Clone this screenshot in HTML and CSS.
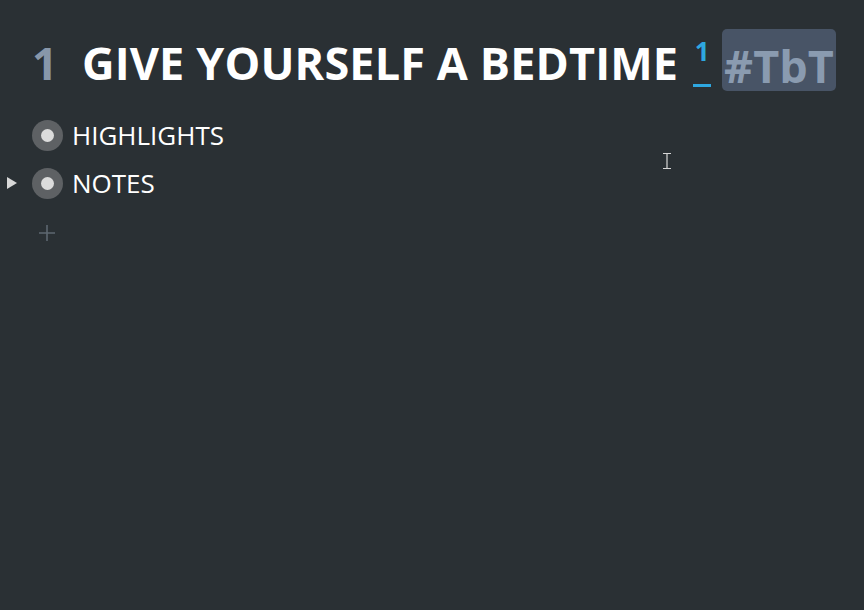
FILE: index.html
```html
<!DOCTYPE html>
<html lang="en">
<head>
  <meta charset="UTF-8">
  <title>Give yourself a bedtime</title>
  <link rel="stylesheet" href="styles.css">
</head>
<body>

<div class="page">
  <h1 class="title">
    <span class="num">1</span>
    <span class="text">GIVE YOURSELF A BEDTIME</span>
    <sup class="ref">1</sup>
    <span class="tag">#TbT</span>
  </h1>

  <div class="blocks">
    <div class="block">
      <span class="toggle"></span>
      <span class="bullet"><span class="dot"></span></span>
      <span class="label">HIGHLIGHTS</span>
    </div>
    <div class="block">
      <span class="toggle open">
        <svg width="12" height="12" viewBox="0 0 12 12"><path d="M1 0 L11 6 L1 12 Z" fill="#d8d8d8"/></svg>
      </span>
      <span class="bullet"><span class="dot"></span></span>
      <span class="label">NOTES</span>
    </div>
    <div class="add">
      <svg width="18" height="18" viewBox="0 0 18 18"><path d="M9 1 V17 M1 9 H17" stroke="#5d6770" stroke-width="1.6"/></svg>
    </div>
  </div>
</div>

<div class="cursor">
  <svg width="8" height="16" viewBox="0 0 8 16"><path d="M0 0.5 H8 M0 15.5 H8 M4 0 V16" stroke="#d6d6d6" stroke-width="1.2"/></svg>
</div>

</body>
</html>
```

FILE: styles.css
```css
body {
  margin: 0;
  padding: 0;
  background-color: #2a3034;
  font-family: "Open Sans", "Noto Sans", sans-serif;
  color: #fff;
  height: 610px;
  overflow: hidden;
}

.page {
  padding: 29px 0 0 32px;
}

.title {
  display: flex;
  align-items: center;
  margin: 0;
  font-size: 45px;
  font-weight: 700;
  line-height: 62px;
  height: 62px;
}

.num {
  color: #8897aa;
  width: 50px;
  padding-top: 6px;
}

.text {
  color: #fff;
  padding-top: 6px;
  letter-spacing: 0.13px;
}

.ref {
  color: #2ea7e0;
  font-size: 26px;
  line-height: 26px;
  align-self: flex-start;
  margin: 9px 0 0 15px;
  padding-bottom: 2px;
  border-bottom: 3px solid #2ea7e0;
  width: 18px;
  text-align: center;
  height: 49px;
  box-sizing: border-box;
}

.tag {
  margin-left: 11px;
  background-color: #485466;
  color: #8a9bb0;
  border-radius: 5px;
  padding: 6px 2px 0;
  height: 62px;
  box-sizing: border-box;
}

.blocks {
  margin-top: 20px;
  margin-left: -32px;
}

.block {
  display: flex;
  align-items: center;
  height: 48px;
}

.toggle {
  width: 32px;
  display: flex;
  padding-left: 6px;
  box-sizing: border-box;
}

.bullet {
  width: 31px;
  height: 31px;
  border-radius: 50%;
  background-color: #5e6164;
  display: flex;
  align-items: center;
  justify-content: center;
}

.dot {
  width: 13px;
  height: 13px;
  border-radius: 50%;
  background-color: #dcdcdc;
}

.label {
  margin-left: 9px;
  font-size: 26px;
  color: #fff;
}

.add {
  padding: 17px 0 0 38px;
}

.cursor {
  position: absolute;
  left: 663px;
  top: 152px;
}
```
